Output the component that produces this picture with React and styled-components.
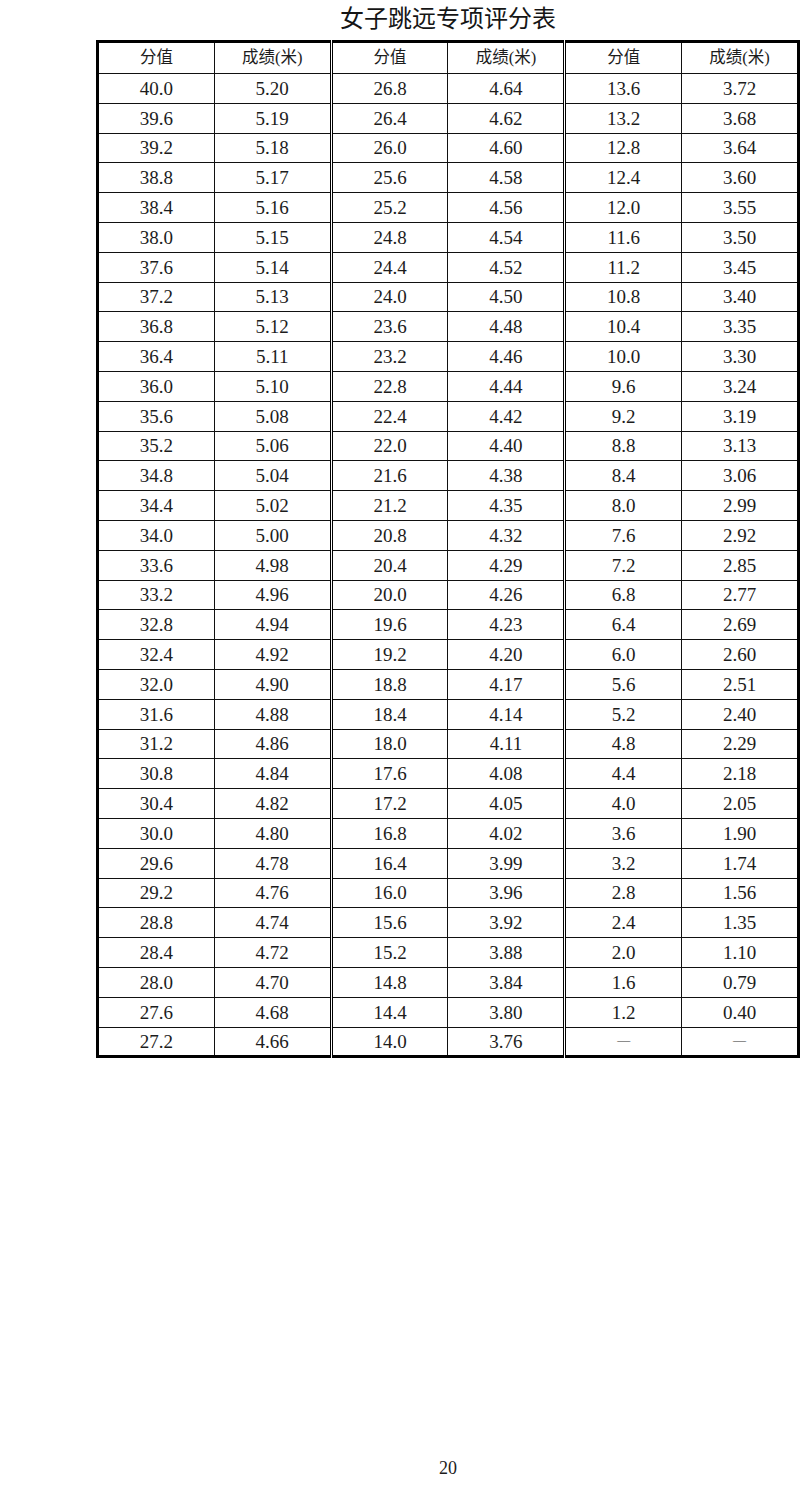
import React from 'react'
import styled, { createGlobalStyle } from 'styled-components'

const GlobalStyle = createGlobalStyle`
  html, body {
    margin: 0;
    padding: 0;
    background: #fff;
  }
`

const Page = styled.div`
  width: 800px;
  min-height: 1485px;
  display: flex;
  flex-direction: column;
  box-sizing: border-box;
  padding: 0 0 0 96px;
  color: #1c1c1c;
`

const Sheet = styled.div`
  width: 704px;
  display: flex;
  flex-direction: column;
  align-items: center;
`

const Title = styled.h1`
  margin: 0;
  height: 40px;
  line-height: 33px;
  font-family: 'Noto Sans CJK SC', 'Noto Sans', sans-serif;
  font-size: 24px;
  font-weight: 400;
  color: #151515;
`

const Table = styled.table`
  width: 704px;
  border-collapse: collapse;
  table-layout: fixed;
  border: 3px solid #000;
`

const Row = styled.tr`
  height: ${(p) => (p.$head ? '32px' : '29.8px')};
`

const Cell = styled.td`
  padding: 0;
  text-align: center;
  vertical-align: middle;
  border: 1px solid #111;
  border-right: ${(p) => (p.$split ? '3px double #000' : '1px solid #111')};
  font-family: 'Liberation Serif', 'Noto Sans CJK SC', serif;
  font-size: ${(p) => (p.$head ? '16.5px' : '19px')};
  font-weight: 400;
  color: #1c1c1c;
  line-height: 1;
`

const Dash = styled.span`
  display: inline-block;
  font-size: 13px;
  color: #333;
  transform: translateY(-4px);
`

const Footer = styled.div`
  margin-top: auto;
  width: 704px;
  padding-bottom: 7px;
  text-align: center;
  font-family: 'Liberation Serif', serif;
  font-size: 18px;
  line-height: 20px;
  color: #1c1c1c;
`

const left = [
  '5.20', '5.19', '5.18', '5.17', '5.16', '5.15', '5.14', '5.13', '5.12', '5.11',
  '5.10', '5.08', '5.06', '5.04', '5.02', '5.00', '4.98', '4.96', '4.94', '4.92',
  '4.90', '4.88', '4.86', '4.84', '4.82', '4.80', '4.78', '4.76', '4.74', '4.72',
  '4.70', '4.68', '4.66',
]
const middle = [
  '4.64', '4.62', '4.60', '4.58', '4.56', '4.54', '4.52', '4.50', '4.48', '4.46',
  '4.44', '4.42', '4.40', '4.38', '4.35', '4.32', '4.29', '4.26', '4.23', '4.20',
  '4.17', '4.14', '4.11', '4.08', '4.05', '4.02', '3.99', '3.96', '3.92', '3.88',
  '3.84', '3.80', '3.76',
]
const right = [
  '3.72', '3.68', '3.64', '3.60', '3.55', '3.50', '3.45', '3.40', '3.35', '3.30',
  '3.24', '3.19', '3.13', '3.06', '2.99', '2.92', '2.85', '2.77', '2.69', '2.60',
  '2.51', '2.40', '2.29', '2.18', '2.05', '1.90', '1.74', '1.56', '1.35', '1.10',
  '0.79', '0.40',
]

const score = (start, i) => (start - 0.4 * i).toFixed(1)

const rows = left.map((v, i) => [
  score(40, i),
  v,
  score(26.8, i),
  middle[i],
  right[i] ? score(13.6, i) : null,
  right[i] || null,
])

export default function App() {
  return (
    <Page>
      <GlobalStyle />
      <Sheet>
        <Title>女子跳远专项评分表</Title>
        <Table>
          <thead>
            <Row $head>
              {['分值', '成绩(米)', '分值', '成绩(米)', '分值', '成绩(米)'].map(
                (t, i) => (
                  <Cell as="th" key={i} $head $split={i === 1 || i === 3}>
                    {t}
                  </Cell>
                ),
              )}
            </Row>
          </thead>
          <tbody>
            {rows.map((r, ri) => (
              <Row key={ri}>
                {r.map((c, ci) => (
                  <Cell key={ci} $split={ci === 1 || ci === 3}>
                    {c === null ? <Dash>—</Dash> : c}
                  </Cell>
                ))}
              </Row>
            ))}
          </tbody>
        </Table>
      </Sheet>
      <Footer>20</Footer>
    </Page>
  )
}
